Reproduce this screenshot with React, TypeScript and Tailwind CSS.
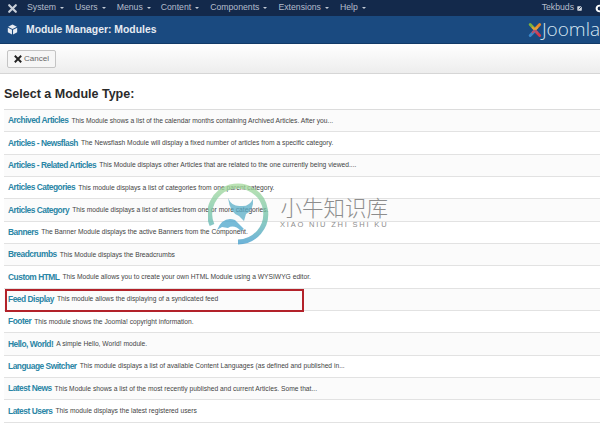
import React from "react";

const menu: [string, string][] = [
  ["System", "mr-[11px]"],
  ["Users", "mr-[11px]"],
  ["Menus", "mr-[10px]"],
  ["Content", "mr-[11px]"],
  ["Components", "mr-[11px]"],
  ["Extensions", "mr-[11px]"],
  ["Help", "mr-0"],
];
const rows: [string, string][] = [
  ["Archived Articles", "This Module shows a list of the calendar months containing Archived Articles. After you..."],
  ["Articles - Newsflash", "The Newsflash Module will display a fixed number of articles from a specific category."],
  ["Articles - Related Articles", "This Module displays other Articles that are related to the one currently being viewed...."],
  ["Articles Categories", "This module displays a list of categories from one parent category."],
  ["Articles Category", "This module displays a list of articles from one or more categories."],
  ["Banners", "The Banner Module displays the active Banners from the Component."],
  ["Breadcrumbs", "This Module displays the Breadcrumbs"],
  ["Custom HTML", "This Module allows you to create your own HTML Module using a WYSIWYG editor."],
  ["Feed Display", "This module allows the displaying of a syndicated feed"],
  ["Footer", "This module shows the Joomla! copyright information."],
  ["Hello, World!", "A simple Hello, World! module."],
  ["Language Switcher", "This module displays a list of available Content Languages (as defined and published in..."],
  ["Latest News", "This Module shows a list of the most recently published and current Articles. Some that..."],
  ["Latest Users", "This module displays the latest registered users"],
];

function JoomlaMark({ size }: { size: number }) {
  return (
    <svg width={size} height={size} viewBox="0 0 20 20" fill="none" strokeWidth="3.6" strokeLinecap="round">
      <path d="M4 3 L9 8" stroke="#7fb03a" />
      <path d="M16 3 L11 8" stroke="#e8862c" />
      <path d="M16 17 L11 12" stroke="#d8384a" />
      <path d="M4 17 L9 12" stroke="#3a86c8" />
      <path d="M7 7 Q10 11 13 7" stroke="#e2a03a" strokeWidth="2.4" />
      <path d="M7 13 Q10 9 13 13" stroke="#b8506a" strokeWidth="2.4" />
    </svg>
  );
}

export default function App() {
  return (
    <div className="relative w-[600px] h-[423px] overflow-hidden bg-white font-['Liberation_Sans',Arial,sans-serif]">
      <div className="flex h-4 items-center bg-[#13294b] text-[#b4bdcb] text-[8.7px] pl-[7px]">
        <svg width="11" height="11" viewBox="0 0 20 20" stroke="#c9d0da" strokeWidth="4" strokeLinecap="round" className="mr-[9px]">
          <path d="M4 4 L16 16 M16 4 L4 16" />
        </svg>
        {menu.map(([m, mr]) => (
          <span key={m} className={`flex items-center whitespace-nowrap ${mr}`}>
            {m}
            <span className="ml-[4px] mt-[1px] border-x-[2px] border-t-[2px] border-x-transparent border-t-[#c3cbd6]" />
          </span>
        ))}
        <span className="ml-auto flex items-center gap-[3px] whitespace-nowrap">
          Tekbuds
          <svg width="6" height="6" viewBox="0 0 10 10"><rect x="0.5" y="2" width="7.5" height="7.5" rx="1" fill="#d5dae2" /><path d="M3 7 L9 1" stroke="#13294b" strokeWidth="1.4" /></svg>
        </span>
        <svg width="9" height="9" viewBox="0 0 10 10" className="ml-[12px] mr-[-4px]">
          <circle cx="5" cy="5" r="3.2" fill="none" stroke="#fff" strokeWidth="2.2" />
        </svg>
      </div>

      <div className="flex h-[28px] items-center justify-between bg-[#1a4a80] border-b border-[#123a68]">
        <div className="flex items-center">
          <svg width="11" height="11" viewBox="0 0 20 20" className="ml-[7px] mr-[8px]" fill="#e8edf3">
            <path d="M10 1 L18 5 L10 9 L2 5 Z" />
            <path d="M1.5 7 L9 10.6 L9 19 L1.5 15 Z" />
            <path d="M18.5 7 L11 10.6 L11 19 L18.5 15 Z" />
          </svg>
          <span className="text-[10.4px] font-bold text-[#e6ebf2]">Module Manager: Modules</span>
        </div>
        <div className="flex w-[73px] shrink-0 items-center overflow-hidden">
          <JoomlaMark size={20} />
          <span className="ml-[-1px] text-[19px] leading-none text-[#d8e8f2] font-['Open_Sans',sans-serif] font-light">Joomla</span>
        </div>
      </div>

      <div className="flex h-[30px] items-center bg-gradient-to-b from-[#ffffff] to-[#ededed] border-b border-[#d6d6d6] pl-[7px]">
        <div className="flex h-[18px] w-[49px] items-center justify-center gap-[2px] rounded-[2px] border border-[#c4c4c4] bg-[#f6f6f6] text-[8px] text-[#666]">
          <svg width="8" height="8" viewBox="0 0 10 10" stroke="#222" strokeWidth="2.4"><path d="M1 1 L9 9 M9 1 L1 9" /></svg>
          Cancel
        </div>
      </div>

      <h1 className="mt-[11px] ml-1 h-[24px] text-[12.5px] font-bold leading-[19px] text-[#2a2a2a]">Select a Module Type:</h1>

      <ul className="ml-1 border-t border-[#dcdcdc]">
        {rows.map(([t, d], i) => (
          <li key={t} className={`flex h-[22.33px] items-center whitespace-nowrap border-b border-[#e2e2e2] pl-1 ${i % 2 === 0 ? "bg-[#fbfbfb]" : "bg-white"}`}>
            <span className="mr-[3px] text-[8.4px] font-bold tracking-[-0.48px] text-[#2a85a5]">{t}</span>
            <span className="text-[6.7px] text-[#444]">{d}</span>
          </li>
        ))}
      </ul>

      <div className="absolute left-[5px] top-[289px] h-[23px] w-[299px] border-2 border-[#b3222a]" />

      <div className="absolute left-[208px] top-[183px] flex items-start">
        <svg width="62" height="62" viewBox="0 0 62 62" fill="none" opacity="0.75">
          <defs>
            <linearGradient id="wm" x1="0" y1="0" x2="0" y2="1">
              <stop offset="0" stopColor="#a3d99a" />
              <stop offset="0.55" stopColor="#6cc0a8" />
              <stop offset="1" stopColor="#3f9ccb" />
            </linearGradient>
          </defs>
          <path d="M4 42 A28 28 0 1 1 30 59 " stroke="url(#wm)" strokeWidth="5" />
          <path d="M20 15 Q24 24 33 23 Q41 24 45 16 Q46 27 38 31 L36 38 L31 33 Q22 30 20 15 Z" fill="#5aaec8" />
          <path d="M9 47 Q15 33 27 37 L36 46 L33 48 Q26 41 20 45 L14 44 Z" fill="#4aa5cc" />
        </svg>
        <div className="ml-[10px] mt-[10px] flex flex-col items-center font-['Noto_Sans_CJK_SC',sans-serif] text-[#8d8d8d]">
          <div className="text-[21.5px] font-light leading-[27px]">小牛知识库</div>
          <div className="text-[7.5px] leading-[9px] tracking-[1.8px] font-['Liberation_Sans',sans-serif] whitespace-nowrap">XIAO NIU ZHI SHI KU</div>
        </div>
      </div>
    </div>
  );
}
